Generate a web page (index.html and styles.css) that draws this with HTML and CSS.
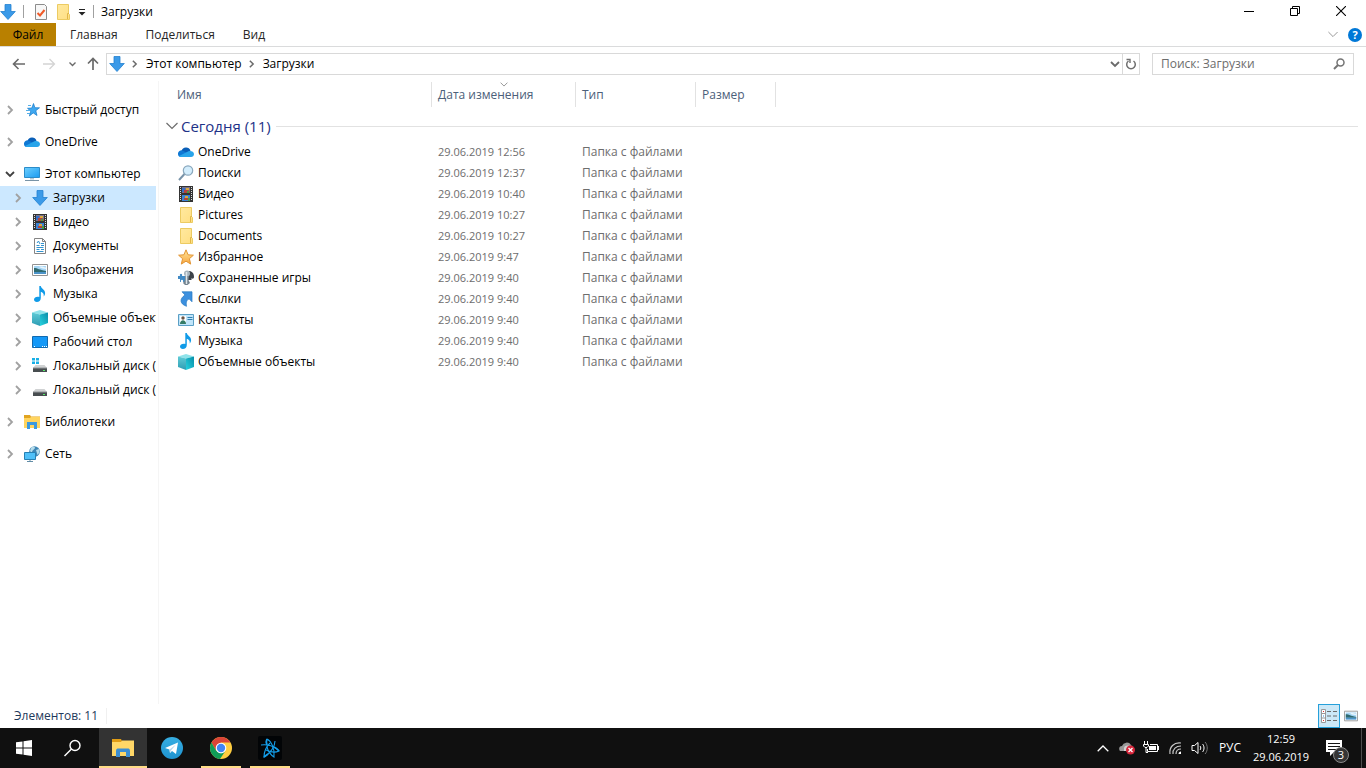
FILE: index.html
```html
<!DOCTYPE html>
<html lang="ru">
<head>
<meta charset="utf-8">
<title>Загрузки</title>
<link rel="stylesheet" href="styles.css">
</head>
<body>
<svg class="sprite" aria-hidden="true">
  <defs>
    <linearGradient id="g-folder" x1="0" y1="0" x2="1" y2="1"><stop offset="0" stop-color="#ffe99f"/><stop offset="1" stop-color="#ffdf83"/></linearGradient>
    <linearGradient id="g-screen" x1="0" y1="0" x2="1" y2="1"><stop offset="0" stop-color="#6fd0ff"/><stop offset="1" stop-color="#1b9bf0"/></linearGradient>
    <linearGradient id="g-star" x1="0" y1="0" x2="0" y2="1"><stop offset="0" stop-color="#ffe79a"/><stop offset="1" stop-color="#f7a540"/></linearGradient>
    <linearGradient id="g-tg" x1="0" y1="0" x2="0" y2="1"><stop offset="0" stop-color="#36aee2"/><stop offset="1" stop-color="#1f93d0"/></linearGradient>
    <linearGradient id="g-cube-l" x1="0" y1="0" x2="0" y2="1"><stop offset="0" stop-color="#5fcbd6"/><stop offset="1" stop-color="#2d9cb4"/></linearGradient>
    <linearGradient id="g-cube-r" x1="0" y1="1" x2="1" y2="0"><stop offset="0" stop-color="#27d3e0"/><stop offset="1" stop-color="#078da8"/></linearGradient>
    <symbol id="down" viewBox="0 0 16 16"><path d="M5 .5h6v7h4.300L8 15.500.7 7.500H5z" fill="#3b9ae8" stroke="#2381d0" stroke-width=".8"/></symbol>
    <symbol id="cloud" viewBox="0 0 16 16"><path d="M3.500 7a4.800 4.800 0 0 1 9-.5L9 10z" fill="#0a5fb8"/><path d="M0 10.300A3.500 3.500 0 0 1 5 6.700L12.500 11 8 13H3a3 3 0 0 1-3-2.700z" fill="#0f78d4"/><path d="M1 12l9-4.500c2-1 6-.3 6 2.500 0 2-1.300 3-3 3H3c-1 0-1.500-.4-2-1z" fill="#28a4ea"/></symbol>
    <symbol id="pin" viewBox="0 0 16 16"><path d="M9.500 1.500l1.400 4.200 4.600.1-3.700 2.900 1.200 4.800-3.800-2.600L5.400 14l1.300-4.700-3.200-3 4.300-.3z" fill="#3fa8f0" stroke="#1578c8" stroke-width=".7"/><path d="M4 3.500h3M2 8.500h4M3 11.500h3" stroke="#54aee8"/></symbol>
    <symbol id="pc" viewBox="0 0 16 16"><path d="M.5 1.500h15v10H.5z" fill="url(#g-screen)" stroke="#2b8cc9"/><path d="M6 12h4v1.500H6z" fill="#b5c8d4"/><path d="M1 14.500h14" stroke="#7893a6"/></symbol>
    <symbol id="video" viewBox="0 0 16 16"><path d="M1 0h14v16H1z" fill="#343434"/><path d="M4 1h8v6H4z" fill="#78718a"/><path d="M4 9h8v6H4z" fill="#3c82d6"/><path d="M4 2h3v4H4z" fill="#376fc7"/><path d="M6 4h4l2 2v1H6zM6 12h4v2H6z" fill="#b2433f"/><path d="M8 2h3v2H8zM7 10h3v2H7z" fill="#d9a83c"/><path d="M9 5h2v2H9zM10 12h2v3h-2z" fill="#479c45"/><path d="M2.500 1v14M13.500 1v14" stroke="#ddd" stroke-dasharray="1 1"/></symbol>
    <symbol id="doc" viewBox="0 0 16 16"><path d="M2.500.5h8l3 3v12h-11z" fill="#fff" stroke="#848484"/><path d="M10.500.5v3h3" fill="none" stroke="#848484"/><path d="M5 5l1.500-2L8 6M4.500 7.500h3M9 5.500h3M9 7.500h3M4.500 9.500h7M4.500 11.500h3M9 11.500h3M4.500 13.500h7" fill="none" stroke="#3293cf"/></symbol>
    <symbol id="image" viewBox="0 0 16 16"><path d="M.5 2.500h15v11H.5z" fill="#fff" stroke="#929292"/><path d="M2 4h12v8H2z" fill="#a5d5f5"/><path d="M2 6c4 0 5 2 12 3v1H2z" fill="#2f6a70"/><path d="M2 10h12v2H2z" fill="#4b93c8"/><path d="M7 5c2-1 4 0 7 .5V7c-2-.5-4-.2-7-2z" fill="#e8f5fc"/></symbol>
    <symbol id="music" viewBox="0 0 16 16"><path d="M7.300 0h1.500c.4 3 4.300 3.500 4.300 7 0 1.400-.6 2.500-1.400 3.500.4-2.700-.5-4-2.900-4.800V12c0 2.500-1.700 4-4 4C3.200 16 2 15 2 13.600c0-2 2.500-3.300 5.300-2.600z" fill="#109be8"/></symbol>
    <symbol id="cube" viewBox="0 0 16 16"><path d="M0 2.500L8 0l8 2.500-8 2z" fill="#8fe3ea"/><path d="M0 2.500l8 2V16l-8-3z" fill="url(#g-cube-l)"/><path d="M16 2.500l-8 2V16l8-3z" fill="url(#g-cube-r)"/></symbol>
    <symbol id="desktop" viewBox="0 0 16 16"><path d="M.5 2.500h15v11H.5z" fill="#1498f7" stroke="#116ab0"/><path d="M2 12.500h1M10 12.500h1M12 12.500h1M14 12.500h1" stroke="#fff"/></symbol>
    <symbol id="disk" viewBox="0 0 16 16"><path d="M3.500 7h9L15 10H1z" fill="#d0d2d3"/><path d="M1 10h14v4H1z" fill="#484d50"/><path d="M1 9.500h14v1H1z" fill="#929799"/><path d="M11 12.500h2" stroke="#56ed68"/></symbol>
    <symbol id="windisk" viewBox="0 0 16 16"><use href="#disk"/><path d="M0 0h3v2.500H0zM4 0h3v2.500H4zM0 3.500h3V6H0zM4 3.500h3V6H4z" fill="#18afe6"/></symbol>
    <symbol id="library" viewBox="0 0 16 16"><path d="M0 1h6l1 1.500h9V14H0z" fill="#e1a421"/><path d="M0 4h6l1-1h9v11H0z" fill="#ffd45f"/><path d="M3 8h10v7h-3v-4H6v4H3z" fill="#3b99df"/></symbol>
    <symbol id="network" viewBox="0 0 16 16"><circle cx="10.500" cy="5.500" r="5.300" fill="#3f86b5"/><path d="M7 2c2-2 4-1 4 0s-3 2-3 4-1 0-2-1zM12 4l3-1c1 2 0 5-1.500 6z" fill="#b5dceb"/><path d="M.5 6.500h11v7H.5z" fill="#4fc0f8" stroke="#2680b3"/><path d="M6 14v1M3 15.500h6" stroke="#618ca6"/></symbol>
    <symbol id="search-col" viewBox="0 0 16 16"><path d="M1 15l5.500-6" stroke="#7893a9" stroke-width="2"/><circle cx="10" cy="5.500" r="4.700" fill="#d3edfc" stroke="#8aa8bd" stroke-width="1.200"/></symbol>
    <symbol id="folder" viewBox="0 0 16 16"><path d="M2.500.5h11v9l1 1v5h-12z" fill="url(#g-folder)" stroke="#eccb62"/><path d="M12.500 15v-5.500h1.500" fill="none" stroke="#e1b748"/></symbol>
    <symbol id="star" viewBox="0 0 16 16"><path d="M8 .8l2.100 5 5.300.4-4 3.500 1.300 5.400L8 12.200l-4.700 2.900 1.300-5.400-4-3.500 5.300-.4z" fill="url(#g-star)" stroke="#e19535"/></symbol>
    <symbol id="games" viewBox="0 0 16 16"><path d="M0 6h2c-1-3 3-3 2 0h3v6H5c1-3-3-3-2 0H2V9H0z" fill="#418ac5"/><path d="M9 1h3c3 1 4 3 4 6 0 2-2 2-2.500 1v2H10z" fill="#3c4249"/><circle cx="9" cy="3.500" r="3" fill="#a5b3bd"/><path d="M7 6h4l-.5 4 1.500 3-2.500 2H7l-2-2 2-3z" fill="#74838f"/><path d="M8.500 2v12" stroke="#dee6eb" stroke-width="1.500"/></symbol>
    <symbol id="link" viewBox="0 0 16 16"><path d="M4 .8h10v10l-3-3c-3 2-3 4-2.500 7.500C2 13 1 8 7 4z" fill="#3c90df" stroke="#2579c1" stroke-width=".7"/></symbol>
    <symbol id="contact" viewBox="0 0 16 16"><path d="M.5 2.500h15v11H.5z" fill="#c1e5fa" stroke="#5a9fc5"/><path d="M2 4h6v8H2z" fill="#fff"/><circle cx="5" cy="6" r="1.700" fill="#695445"/><path d="M2 12c0-5 6-5 6 0z" fill="#347b66"/><path d="M9.500 5.500h5M9.500 7.500h5" stroke="#317faf"/></symbol>
    <symbol id="chev-r" viewBox="0 0 8 12"><path d="M2 2l4 4-4 4" fill="none" stroke="currentColor" stroke-width="1.800"/></symbol>
    <symbol id="chev-d" viewBox="0 0 12 8"><path d="M2 2l4 4 4-4" fill="none" stroke="currentColor" stroke-width="1.800"/></symbol>
    <symbol id="thin-d" viewBox="0 0 12 8"><path d="M.5 1L6 6.500 11.500 1" fill="none" stroke="currentColor" stroke-width="1.200"/></symbol>
    <symbol id="arrow-l" viewBox="0 0 14 12"><path d="M6.500 1L1.500 6l5 5M1.500 6H13" fill="none" stroke="currentColor" stroke-width="1.600"/></symbol>
    <symbol id="arrow-r" viewBox="0 0 14 12"><path d="M7.500 1l5 5-5 5M12.500 6H1" fill="none" stroke="currentColor" stroke-width="1.300"/></symbol>
    <symbol id="arrow-u" viewBox="0 0 12 14"><path d="M1 6.500l5-5 5 5M6 1.500V13" fill="none" stroke="currentColor" stroke-width="1.700"/></symbol>
  </defs>
</svg>

<header class="titlebar">
  <svg class="i16"><use href="#down"/></svg>
  <span class="bar-sep"></span>
  <button class="quick" aria-label="Свойства"><svg class="i16" viewBox="0 0 16 16"><path d="M2.500.5h9l2 2v13h-11z" fill="#f7f7f7" stroke="#8c8c8c"/><path d="M4.500 9l2.500 2.500L11.500 6" fill="none" stroke="#f05a28" stroke-width="2"/></svg></button>
  <button class="quick" aria-label="Новая папка"><svg class="i16"><use href="#folder"/></svg></button>
  <button class="quick narrow" aria-label="Настройка панели"><svg width="8" height="8" viewBox="0 0 8 8"><path d="M1 1.500h6" stroke="#222"/><path d="M.5 4h7L4 7.500z" fill="#222"/></svg></button>
  <span class="bar-sep second"></span>
  <h1 class="title">Загрузки</h1>
  <div class="window-controls">
    <button aria-label="Свернуть"><svg width="10" height="10" viewBox="0 0 10 10"><path d="M0 5.500h10" stroke="#000"/></svg></button>
    <button aria-label="Восстановить"><svg width="10" height="10" viewBox="0 0 10 10"><path d="M.5 2.500h7v7h-7zM2.500 2V.5h7v7H8" fill="none" stroke="#000"/></svg></button>
    <button aria-label="Закрыть"><svg width="10" height="10" viewBox="0 0 10 10"><path d="M0 0l10 10M10 0L0 10" stroke="#000" stroke-width="1.100"/></svg></button>
  </div>
</header>

<div class="ribbon">
  <button class="tab file">Файл</button>
  <button class="tab">Главная</button>
  <button class="tab">Поделиться</button>
  <button class="tab">Вид</button>
  <div class="ribbon-end">
    <button aria-label="Развернуть ленту"><svg class="pale" width="10" height="7"><use href="#thin-d"/></svg></button>
    <button class="help" aria-label="Справка">?</button>
  </div>
</div>

<nav class="navbar">
  <button class="nav back" aria-label="Назад"><svg width="14" height="12"><use href="#arrow-l"/></svg></button>
  <button class="nav forward" aria-label="Вперёд" disabled><svg width="14" height="12"><use href="#arrow-r"/></svg></button>
  <button class="nav recent" aria-label="Последние"><svg width="9" height="6"><use href="#chev-d"/></svg></button>
  <button class="nav up" aria-label="Вверх"><svg width="12" height="14"><use href="#arrow-u"/></svg></button>
  <div class="address">
    <svg class="i16"><use href="#down"/></svg>
    <svg class="crumb-sep" width="7" height="10"><use href="#chev-r"/></svg>
    <a href="#pc">Этот компьютер</a>
    <svg class="crumb-sep" width="7" height="10"><use href="#chev-r"/></svg>
    <a href="#downloads">Загрузки</a>
    <button class="drop" aria-label="Предыдущие расположения"><svg width="12" height="8"><use href="#chev-d"/></svg></button>
    <button class="refresh" aria-label="Обновить"><svg width="12" height="12" viewBox="0 0 12 12"><path d="M3.500 3A4.300 4.300 0 1 0 8.500 3" fill="none" stroke="#6f6f6f" stroke-width="1.500"/><path d="M1.500 1.500h3.500V5" fill="none" stroke="#6f6f6f" stroke-width="1.400"/></svg></button>
  </div>
  <label class="search"><input type="text" placeholder="Поиск: Загрузки" aria-label="Поиск: Загрузки"><svg width="12" height="12" viewBox="0 0 12 12"><circle cx="7.500" cy="4.500" r="3.500" fill="none" stroke="#747474" stroke-width="1.500"/><path d="M5 7L1 11" stroke="#747474" stroke-width="2"/></svg></label>
</nav>

<div class="content">
  <aside class="sidebar">
    <ul class="tree">
      <li><a class="node" href="#quick"><svg class="arrow"><use href="#chev-r"/></svg><svg class="i16"><use href="#pin"/></svg><span>Быстрый доступ</span></a></li>
      <li><a class="node" href="#onedrive"><svg class="arrow"><use href="#chev-r"/></svg><svg class="i16"><use href="#cloud"/></svg><span>OneDrive</span></a></li>
      <li><a class="node" href="#pc"><svg class="arrow open"><use href="#chev-d"/></svg><svg class="i16"><use href="#pc"/></svg><span>Этот компьютер</span></a>
        <ul class="branch">
          <li><a class="node selected" href="#downloads"><svg class="arrow"><use href="#chev-r"/></svg><svg class="i16"><use href="#down"/></svg><span>Загрузки</span></a></li>
          <li><a class="node" href="#videos"><svg class="arrow"><use href="#chev-r"/></svg><svg class="i16"><use href="#video"/></svg><span>Видео</span></a></li>
          <li><a class="node" href="#documents"><svg class="arrow"><use href="#chev-r"/></svg><svg class="i16"><use href="#doc"/></svg><span>Документы</span></a></li>
          <li><a class="node" href="#images"><svg class="arrow"><use href="#chev-r"/></svg><svg class="i16"><use href="#image"/></svg><span>Изображения</span></a></li>
          <li><a class="node" href="#songs"><svg class="arrow"><use href="#chev-r"/></svg><svg class="i16"><use href="#music"/></svg><span>Музыка</span></a></li>
          <li><a class="node" href="#objects"><svg class="arrow"><use href="#chev-r"/></svg><svg class="i16"><use href="#cube"/></svg><span>Объемные объекты</span></a></li>
          <li><a class="node" href="#desk"><svg class="arrow"><use href="#chev-r"/></svg><svg class="i16"><use href="#desktop"/></svg><span>Рабочий стол</span></a></li>
          <li><a class="node" href="#c"><svg class="arrow"><use href="#chev-r"/></svg><svg class="i16"><use href="#windisk"/></svg><span>Локальный диск (C:)</span></a></li>
          <li><a class="node" href="#d"><svg class="arrow"><use href="#chev-r"/></svg><svg class="i16"><use href="#disk"/></svg><span>Локальный диск (D:)</span></a></li>
        </ul>
      </li>
      <li><a class="node" href="#libraries"><svg class="arrow"><use href="#chev-r"/></svg><svg class="i16"><use href="#library"/></svg><span>Библиотеки</span></a></li>
      <li><a class="node" href="#net"><svg class="arrow"><use href="#chev-r"/></svg><svg class="i16"><use href="#network"/></svg><span>Сеть</span></a></li>
    </ul>
  </aside>

  <main class="files">
    <table class="list">
      <colgroup><col class="c-name"><col class="c-date"><col class="c-type"><col class="c-size"><col></colgroup>
      <thead>
        <tr><th>Имя</th><th>Дата изменения<svg class="sort" width="8" height="5"><use href="#thin-d"/></svg></th><th>Тип</th><th>Размер</th><td></td></tr>
      </thead>
      <tbody>
        <tr class="group"><th colspan="5"><div class="group-head"><svg width="12" height="8"><use href="#thin-d"/></svg><span>Сегодня (11)</span></div></th></tr>
        <tr><td><div class="name"><svg class="i16"><use href="#cloud"/></svg>OneDrive</div></td><td class="date">29.06.2019 12:56</td><td>Папка с файлами</td><td></td><td></td></tr>
        <tr><td><div class="name"><svg class="i16"><use href="#search-col"/></svg>Поиски</div></td><td class="date">29.06.2019 12:37</td><td>Папка с файлами</td><td></td><td></td></tr>
        <tr><td><div class="name"><svg class="i16"><use href="#video"/></svg>Видео</div></td><td class="date">29.06.2019 10:40</td><td>Папка с файлами</td><td></td><td></td></tr>
        <tr><td><div class="name"><svg class="i16"><use href="#folder"/></svg>Pictures</div></td><td class="date">29.06.2019 10:27</td><td>Папка с файлами</td><td></td><td></td></tr>
        <tr><td><div class="name"><svg class="i16"><use href="#folder"/></svg>Documents</div></td><td class="date">29.06.2019 10:27</td><td>Папка с файлами</td><td></td><td></td></tr>
        <tr><td><div class="name"><svg class="i16"><use href="#star"/></svg>Избранное</div></td><td class="date">29.06.2019 9:47</td><td>Папка с файлами</td><td></td><td></td></tr>
        <tr><td><div class="name"><svg class="i16"><use href="#games"/></svg>Сохраненные игры</div></td><td class="date">29.06.2019 9:40</td><td>Папка с файлами</td><td></td><td></td></tr>
        <tr><td><div class="name"><svg class="i16"><use href="#link"/></svg>Ссылки</div></td><td class="date">29.06.2019 9:40</td><td>Папка с файлами</td><td></td><td></td></tr>
        <tr><td><div class="name"><svg class="i16"><use href="#contact"/></svg>Контакты</div></td><td class="date">29.06.2019 9:40</td><td>Папка с файлами</td><td></td><td></td></tr>
        <tr><td><div class="name"><svg class="i16"><use href="#music"/></svg>Музыка</div></td><td class="date">29.06.2019 9:40</td><td>Папка с файлами</td><td></td><td></td></tr>
        <tr><td><div class="name"><svg class="i16"><use href="#cube"/></svg>Объемные объекты</div></td><td class="date">29.06.2019 9:40</td><td>Папка с файлами</td><td></td><td></td></tr>
      </tbody>
    </table>
  </main>
</div>

<div class="statusbar">
  <span class="count">Элементов: 11</span>
  <div class="views">
    <button class="view active" aria-label="Таблица"><svg width="16" height="14" viewBox="0 0 16 14"><path d="M.5.5h4v13h-4z" fill="#fff" stroke="#999"/><path d="M.5 4.500h4M.5 9h4" stroke="#999"/><path d="M6 2.500h4M12 2.500h4M6 7h4M12 7h4M6 11.500h4M12 11.500h4" stroke="#6b6b6b"/><path d="M2 2h1v1H2zM2 11h1v1H2z" fill="#d33"/><path d="M2 6.500h1v1H2z" fill="#278be0"/></svg></button>
    <button class="view" aria-label="Эскизы"><svg width="14" height="14"><use href="#image"/></svg></button>
  </div>
</div>

<footer class="taskbar">
  <button class="task" aria-label="Пуск"><svg width="16" height="16" viewBox="0 0 16 16"><path d="M0 2.300L6.500 1.400v6.100H0zM7.500 1.200L16 0v7.500H7.500zM0 8.500h6.500v6.100L0 13.700zM7.500 8.500H16V16l-8.500-1.200z" fill="#fff"/></svg></button>
  <button class="task" aria-label="Поиск"><svg width="18" height="18" viewBox="0 0 18 18"><circle cx="11" cy="6.500" r="5" fill="none" stroke="#fff" stroke-width="1.400"/><path d="M7.500 10l-7 7" stroke="#fff" stroke-width="1.400"/></svg></button>
  <button class="task current" aria-label="Проводник"><svg width="22" height="20" viewBox="0 0 22 20"><path d="M0 1h9l1 2h12v15H0z" fill="#e19d15"/><path d="M0 4h9l1-1.500h12V18H0z" fill="#ffd767"/><path d="M4 13c0-2 1-2.500 2.500-2.500h9c1.500 0 2.500.5 2.500 2.500v6h-4v-5H8v5H4z" fill="#3c8ed2"/></svg></button>
  <button class="task" aria-label="Telegram"><svg width="22" height="22" viewBox="0 0 22 22"><circle cx="11" cy="11" r="11" fill="url(#g-tg)"/><path d="M4 11l13-5.500-2 11.500-4-3-2 2-.6-3.500z" fill="#fff"/><path d="M8.500 12.500L15 7.500l-5 6L9 16z" fill="#b7d8ed"/></svg></button>
  <button class="task running" aria-label="Chrome"><svg width="22" height="22" viewBox="0 0 22 22"><circle cx="11" cy="11" r="11" fill="#ffcd40"/><path d="M1.500 5.500A11 11 0 0 1 20.500 5.500H11L6.200 13.700z" fill="#db4437"/><path d="M1.500 5.500A11 11 0 0 0 10 22l5.500-8.300-4.500 2.800-4.800-2.800z" fill="#0f9d58"/><circle cx="11" cy="11" r="5.300" fill="#fff"/><circle cx="11" cy="11" r="4.200" fill="#4285f4"/></svg></button>
  <button class="task running" aria-label="Battle.net"><svg width="24" height="24" viewBox="0 0 24 24"><rect width="24" height="24" rx="2" fill="#020406"/><g fill="none" stroke="#149eea" stroke-width="1.100"><path d="M3 9c6-1 14 1 18 6-4 2-9 1-13-1"/><path d="M9 3c4 2 8 9 7 18-3-2-6-6-7-10"/><path d="M17 5c0 5-4 12-11 16 0-5 2-10 6-14"/><path d="M9 3c-1 2-1 4 0 6M21 15c-1-2-3-3-5-4M6 21l4-3" stroke-width="1.800"/></g></svg></button>
  <div class="tray">
    <button class="tray-icon" aria-label="Скрытые значки"><svg width="12" height="7" viewBox="0 0 12 7"><path d="M.7 6.300L6 1l5.300 5.300" fill="none" stroke="#fff" stroke-width="1.300"/></svg></button>
    <button class="tray-icon" aria-label="OneDrive"><svg width="16" height="14" viewBox="0 0 16 14"><path d="M3 5a5 5 0 0 1 9-1l3 4v2H1C-.5 8 0 5 3 5z" fill="#999"/><path d="M5 7c1-3 5-3 6-1 2 0 4 1 4 4H5z" fill="#d1d1d1"/><circle cx="11.500" cy="9" r="4.500" fill="#d5253a"/><path d="M9.500 7l4 4m0-4l-4 4" stroke="#fff" stroke-width="1.300"/></svg></button>
    <button class="tray-icon" aria-label="Батарея"><svg width="16" height="14" viewBox="0 0 16 14"><path d="M1.500 0v3M4.500 0v3M.5 3.500h5V5L4 6.500H2L.5 5zM3 6v5.500h2" fill="none" stroke="#fff"/><path d="M7 3.500h7.500v7H4.500V8M15.500 5v4" fill="none" stroke="#fff"/><path d="M6 5h7v4H6z" fill="#fff"/></svg></button>
    <button class="tray-icon" aria-label="Сеть"><svg width="14" height="14" viewBox="0 0 14 14"><path d="M2 13C1 6 6 1 13 2M5 13C4.500 8 8 5 13 5M8 13c0-3 2-5 5-5" fill="none" stroke="#c8c8c8" stroke-width="1.200"/><path d="M10.500 13c0-1.500 1-2.500 2.500-2.500V13z" fill="#fff"/></svg></button>
    <button class="tray-icon" aria-label="Громкость"><svg width="17" height="14" viewBox="0 0 17 14"><path d="M1 4.500h2.500L7 1.500v11L3.500 9.500H1z" fill="none" stroke="#fff"/><path d="M9 5c1 1 1 3 0 4M11.500 3c2 2 2 6 0 8" fill="none" stroke="#fff"/><path d="M14 1c3 3 3 9 0 12" fill="none" stroke="#777"/></svg></button>
    <button class="lang">РУС</button>
    <button class="clock"><time>12:59</time><time>29.06.2019</time></button>
    <button class="notices" aria-label="Уведомления"><svg width="16" height="16" viewBox="0 0 16 16"><path d="M0 0h16v12H8l-4 4v-4H0z" fill="#fff"/><path d="M2 3.500h12M2 6.500h12M2 9.500h8" stroke="#151515"/></svg><span class="badge">3</span></button>
    <span class="show-desktop"></span>
  </div>
</footer>
</body>
</html>
```

FILE: styles.css
```css
* { box-sizing: border-box; }
body {
  margin: 0;
  height: 100vh;
  display: flex;
  flex-direction: column;
  overflow: hidden;
  background: #fff;
  color: #000;
  font: 12px/16px "Open Sans", "Noto Sans", sans-serif;
}
button, input {
  font: inherit;
  color: inherit;
  border: 0;
  padding: 0;
  margin: 0;
  background: none;
}
button { display: flex; align-items: center; justify-content: center; }
a { color: inherit; text-decoration: none; }
ul { list-style: none; margin: 0; padding: 0; }
svg { display: block; flex: none; }
.sprite { position: absolute; width: 0; height: 0; }
.i16 { width: 16px; height: 16px; }

.titlebar { display: flex; align-items: center; height: 23px; }
.bar-sep { width: 1px; height: 13px; margin: 0 6px 0 7px; background: #a0a0a0; }
.quick { width: 22px; height: 22px; }
.quick.narrow { width: 16px; }
.bar-sep.second { margin: 0 7px 0 3px; }
.title { margin: 0; font-size: 12px; font-weight: 400; }
.window-controls { display: flex; margin-left: auto; padding-right: 2px; align-self: flex-start; }
.window-controls button { width: 46px; height: 21px; }

.ribbon { display: flex; height: 24px; border-bottom: 1px solid #dadbdc; }
.tab { padding: 0 14px; color: #262626; }
.tab.file { width: 56px; background: #b98000; color: #000; }
.ribbon-end { display: flex; align-items: center; gap: 10px; margin-left: auto; padding-right: 4px; }
.pale { color: #999; }
.help { width: 14px; height: 14px; border-radius: 50%; background: #0078d7; color: #fff; font-size: 11px; font-weight: 700; }

.navbar { display: flex; align-items: center; height: 34px; padding-right: 12px; color: #6a6a6a; }
.nav { height: 22px; }
.back { width: 38px; }
.forward { width: 22px; color: #d4d4d4; }
.recent { width: 25px; }
.up { width: 16px; margin-right: 5px; }
.address { display: flex; align-items: center; flex: 1; height: 22px; padding-left: 2px; border: 1px solid #d9d9d9; color: #000; }
.crumb-sep { margin: 0 8px 0 6px; color: #6a6a6a; }
.address .drop { width: 14px; height: 20px; margin-left: auto; color: #6a6a6a; }
.refresh { width: 17px; height: 20px; border-left: 1px solid #d9d9d9; }
.search { display: flex; align-items: center; width: 202px; height: 22px; margin-left: 12px; padding: 0 8px; border: 1px solid #d9d9d9; }
.search input { flex: 1; min-width: 0; outline: 0; }
.search input::placeholder { color: #6d6d6d; opacity: 1; }

.content { display: flex; flex: 1; min-height: 0; }
.sidebar { width: 159px; padding: 17px 2px 0 0; border-right: 1px solid #f5f5f5; overflow: hidden; }
.tree { display: flex; flex-direction: column; gap: 8px; }
.node { display: flex; align-items: center; height: 24px; padding-left: 6px; white-space: nowrap; overflow: hidden; }
.node span { margin-left: 5px; }
.arrow { width: 8px; height: 12px; margin-right: 10px; color: #a1a1a1; }
.arrow.open { width: 12px; height: 8px; margin: 0 8px 0 -2px; color: #404040; }
.branch .node { padding-left: 14px; }
.selected { background: #cce8ff; }

.files { flex: 1; min-width: 0; padding: 1px 8px 0 0; }
.list { width: 100%; table-layout: fixed; border-collapse: separate; border-spacing: 0; }
.c-name { width: 273px; }
.c-date { width: 144px; }
.c-type { width: 120px; }
.c-size { width: 80px; }
.list th, .list td { padding: 0 0 0 6px; text-align: left; font-weight: 400; white-space: nowrap; }
.list thead th { position: relative; height: 25px; border-right: 1px solid #e2e2e2; color: #4c607a; }
.list th:first-child { padding-left: 18px; }
.sort { position: absolute; top: 0; left: 50%; margin-left: -4px; color: #777; }
.list .group th { height: 34px; padding: 0 0 0 7px; vertical-align: top; }
.group-head { display: flex; align-items: center; height: 38px; margin-bottom: -4px; gap: 3px; color: #6d6d6d; }
.group-head span { font-size: 15px; line-height: 20px; color: #1e3287; }
.group-head::after { content: ""; flex: 1; height: 1px; margin-left: 2px; background: #e2e2e2; }
.list tbody td { height: 21px; color: #6d6d6d; }
.list tbody td:first-child { padding-left: 19px; color: #000; }
.list .date { font-size: 11px; }
.name { display: flex; align-items: center; gap: 4px; }

.statusbar { display: flex; align-items: center; justify-content: space-between; height: 24px; padding: 0 4px 0 14px; color: #1e395b; }
.count { padding-right: 8px; border-right: 1px solid #f0f0f0; }
.views { display: flex; }
.view { width: 22px; height: 24px; }
.view.active { background: #cce8f7; border: 1px solid #26a0da; }

.taskbar { display: flex; gap: 1px; height: 40px; background: #101010; color: #fff; }
.task { width: 48px; height: 40px; position: relative; }
.task.current { margin-left: 1px; background: #333; }
.task.current::after, .task.running::after { content: ""; position: absolute; left: 4px; right: 4px; bottom: 0; height: 2px; background: #ffdc87; }
.task.current::after { left: 0; right: 0; }
.tray { display: flex; align-items: center; margin-left: auto; }
.tray-icon { width: 24px; height: 40px; }
.lang { width: 38px; height: 40px; }
.clock { flex-direction: column; gap: 2px; width: 64px; height: 40px; font-size: 11px; line-height: 16px; }
.notices { position: relative; width: 42px; height: 40px; }
.badge { position: absolute; left: 20px; top: 19px; width: 16px; height: 16px; border: 1px solid #8a8a8a; border-radius: 50%; background: #353535; font-size: 11px; line-height: 14px; }
.show-desktop { width: 5px; height: 40px; margin-left: 6px; border-left: 1px solid #4d4d4d; }
```
